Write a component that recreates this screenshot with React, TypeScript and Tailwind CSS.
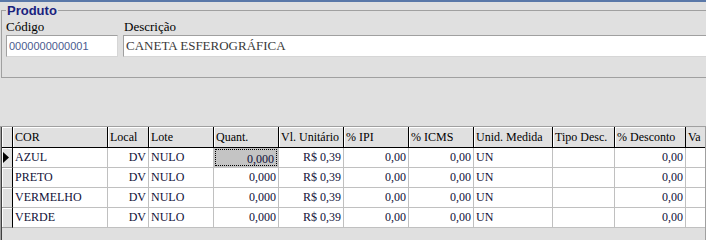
type Col = { label: string; w: number; align: "left" | "right" };

const cols: Col[] = [
  { label: "COR", w: 95, align: "left" },
  { label: "Local", w: 41, align: "right" },
  { label: "Lote", w: 65, align: "left" },
  { label: "Quant.", w: 65, align: "right" },
  { label: "Vl. Unitário", w: 65, align: "right" },
  { label: "% IPI", w: 65, align: "right" },
  { label: "% ICMS", w: 65, align: "right" },
  { label: "Unid. Medida", w: 79, align: "left" },
  { label: "Tipo Desc.", w: 62, align: "left" },
  { label: "% Desconto", w: 71, align: "right" },
];

const rows = ["AZUL", "PRETO", "VERMELHO", "VERDE"].map((cor) => [
  cor,
  "DV",
  "NULO",
  "0,000",
  "R$ 0,39",
  "0,00",
  "0,00",
  "UN",
  "",
  "0,00",
]);

function Arrow() {
  return (
    <svg width="6" height="11" viewBox="0 0 6 11" className="block">
      <polygon points="0,0 6,5.5 0,11" fill="#000" />
    </svg>
  );
}

export default function App() {
  return (
    <div className="flex h-[240px] w-[706px] flex-col overflow-hidden bg-[#e0e0e0] font-['Liberation_Serif',serif] text-black">
      <div className="h-[2px] bg-[#5a78a8]" />

      {/* Produto group */}
      <fieldset className="ml-[1px] box-border h-[76px] border border-r-0 border-[#a0a0a0] pl-[4px] pr-0">
        <legend className="px-[1px] font-['Liberation_Sans',sans-serif] text-[13px] font-bold leading-[17px] text-[#1a237e]">
          Produto
        </legend>
        <div className="flex gap-[5px]">
          <div className="flex w-[112px] flex-col">
            <span className="text-[13px] leading-[16px]">Código</span>
            <div className="flex h-[22px] items-center border border-[#a0a0a0] border-b-[#d6d6d6] border-r-[#d6d6d6] bg-white pl-[2px] font-['Liberation_Sans',sans-serif] text-[11px] text-[#4b5b8f]">
              0000000000001
            </div>
          </div>
          <div className="flex flex-1 flex-col">
            <span className="pl-[1px] text-[13px] leading-[16px]">Descrição</span>
            <div className="flex h-[22px] items-center border border-r-0 border-[#a0a0a0] border-b-[#d6d6d6] bg-white pl-[2px] text-[13px] text-[#3a3a3a]">
              CANETA ESFEROGRÁFICA
            </div>
          </div>
        </div>
      </fieldset>

      <div className="h-[48px] shrink-0" />

      {/* Grid */}
      <div className="flex flex-1 flex-col border-l border-t border-r border-[#a0a0a0] text-[12px]">
        <div className="flex flex-1 flex-col border-l border-[#404040]">
          <div className="flex h-[21px] shrink-0 border-b border-black">
            <div className="w-[11px] shrink-0 border-r border-black shadow-[inset_1px_1px_0_#fff]" />
            {cols.map((c) => (
              <div
                key={c.label}
                style={{ width: c.w }}
                className="shrink-0 overflow-hidden whitespace-nowrap border-r border-black pl-[2px] leading-[20px] shadow-[inset_1px_1px_0_#fff]"
              >
                {c.label}
              </div>
            ))}
            <div className="min-w-0 flex-1 overflow-hidden whitespace-nowrap pl-[2px] leading-[20px]">Va</div>
          </div>

          {rows.map((r, i) => (
            <div key={r[0]} className="flex h-[20px] shrink-0 bg-white text-[#101038]">
              <div className="flex w-[11px] shrink-0 items-center border-b border-r border-b-[#a0a0a0] border-r-black bg-[#e0e0e0] pl-[1px] shadow-[inset_1px_1px_0_#fff]">
                {i === 0 && <Arrow />}
              </div>
              {r.map((v, j) => {
                const focus = i === 0 && j === 3;
                return (
                  <div
                    key={j}
                    style={{ width: cols[j].w }}
                    className={`shrink-0 border-b border-r border-[#c0c0c0] ${
                      focus ? "bg-[#c4c4c4] p-[1px]" : ""
                    }`}
                  >
                    <div
                      className={`h-full overflow-hidden whitespace-nowrap leading-[19px] ${
                        cols[j].align === "right" ? "pr-[2px] text-right" : "pl-[2px] text-left"
                      } ${focus ? "border border-dotted border-black leading-[17px]" : ""}`}
                    >
                      {v}
                    </div>
                  </div>
                );
              })}
              <div className="flex-1 border-b border-[#c0c0c0]" />
            </div>
          ))}
          <div className="flex-1 bg-[#e0e0e0]" />
        </div>
      </div>
    </div>
  );
}
